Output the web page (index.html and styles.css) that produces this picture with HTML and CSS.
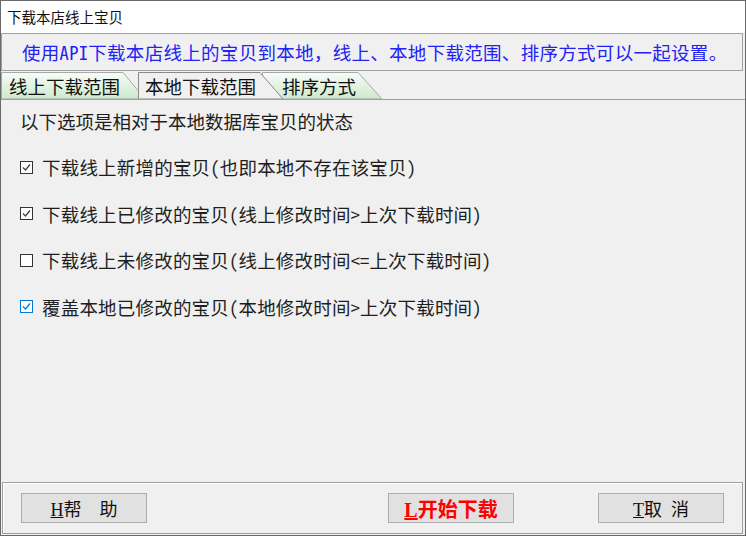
FILE: index.html
```html
<!DOCTYPE html>
<html lang="zh-CN">
<head>
    <meta charset="UTF-8">
    <meta name="viewport" content="width=device-width, initial-scale=1.0">
    <title>下载本店线上宝贝</title>
    <link rel="stylesheet" href="styles.css">
</head>
<body>
    <div class="window">
        <div class="titlebar">下载本店线上宝贝</div>
        <div class="info">使用API下载本店线上的宝贝到本地，线上、本地下载范围、排序方式可以一起设置。</div>
        <div class="tabs">
            <div class="tab tab-online">
                <svg class="tab-bg" width="145" height="27" viewBox="0 0 145 27">
                    <defs>
                        <linearGradient id="g1" x1="0" y1="0" x2="0" y2="1">
                            <stop offset="0" stop-color="#f8fcf8"/>
                            <stop offset="1" stop-color="#cde9cd"/>
                        </linearGradient>
                    </defs>
                    <polygon points="0.5,27 0.5,0.5 122,0.5 144,27" fill="url(#g1)" stroke="#a8a8a8"/>
                </svg>
                <span class="tab-text">线上下载范围</span>
            </div>
            <div class="tab tab-local active">
                <svg class="tab-bg" width="146" height="27" viewBox="0 0 146 27">
                    <polygon points="0.5,27 0.5,0.5 122,0.5 145,27" fill="#f0f0f0" stroke="#8a8a8a"/>
                </svg>
                <span class="tab-text">本地下载范围</span>
            </div>
            <div class="tab tab-sort">
                <svg class="tab-bg" width="122" height="27" viewBox="0 0 122 27">
                    <defs>
                        <linearGradient id="g3" x1="0" y1="0" x2="0" y2="1">
                            <stop offset="0" stop-color="#f8fcf8"/>
                            <stop offset="1" stop-color="#cde9cd"/>
                        </linearGradient>
                    </defs>
                    <polygon points="0.5,27 0.5,0.5 96,0.5 120,27" fill="url(#g3)" stroke="#a8a8a8"/>
                </svg>
                <span class="tab-text">排序方式</span>
            </div>
        </div>
        <div class="panel">
            <p class="note">以下选项是相对于本地数据库宝贝的状态</p>
            <div class="option">
                <span class="box"><svg width="11" height="11" viewBox="0 0 11 11"><path d="M2 5.5 L4.5 8 L9 2.5" fill="none" stroke="#444" stroke-width="1.3"/></svg></span>
                <span>下载线上新增的宝贝(也即本地不存在该宝贝)</span>
            </div>
            <div class="option">
                <span class="box"><svg width="11" height="11" viewBox="0 0 11 11"><path d="M2 5.5 L4.5 8 L9 2.5" fill="none" stroke="#444" stroke-width="1.3"/></svg></span>
                <span>下载线上已修改的宝贝(线上修改时间&gt;上次下载时间)</span>
            </div>
            <div class="option">
                <span class="box"></span>
                <span>下载线上未修改的宝贝(线上修改时间&lt;=上次下载时间)</span>
            </div>
            <div class="option">
                <span class="box box-focus"><svg width="11" height="11" viewBox="0 0 11 11"><path d="M2 5.5 L4.5 8 L9 2.5" fill="none" stroke="#0078d7" stroke-width="1.3"/></svg></span>
                <span>覆盖本地已修改的宝贝(本地修改时间&gt;上次下载时间)</span>
            </div>
        </div>
        <div class="footer">
            <button class="btn btn-help"><u>H</u>帮　助</button>
            <button class="btn btn-start"><u>L</u>开始下载</button>
            <button class="btn btn-cancel"><u>T</u>取&nbsp;&nbsp;消</button>
        </div>
    </div>
</body>
</html>
```

FILE: styles.css
```css
html, body {
    margin: 0;
    padding: 0;
}
body {
    font-family: "Noto Sans Mono CJK SC", "Noto Sans CJK SC", sans-serif;
    background-color: #f0f0f0;
}
.window {
    width: 746px;
    height: 536px;
    box-sizing: border-box;
    border: 1px solid #6a6a6a;
    background-color: #f0f0f0;
    display: flex;
    flex-direction: column;
}
.titlebar {
    height: 32px;
    background-color: white;
    padding-left: 6px;
    font-family: "Noto Sans CJK SC", sans-serif;
    font-size: 14.5px;
    line-height: 32px;
    color: #111;
}
.info {
    height: 36px;
    margin-right: 2px;
    border: 1px solid #a0a0a0;
    padding-left: 20px;
    font-size: 18.5px;
    letter-spacing: 0.3px;
    line-height: 36px;
    color: #2222f4;
    white-space: nowrap;
}
.tabs {
    display: flex;
    height: 28px;
    border-bottom: 1px solid #a0a0a0;
    align-items: flex-end;
}
.tab {
    position: relative;
    height: 27px;
    z-index: 1;
}
.tab-bg {
    position: absolute;
    left: 0;
    top: 0;
}
.tab-text {
    position: relative;
    display: block;
    font-size: 18.5px;
    line-height: 28px;
    color: #111;
    white-space: nowrap;
}
.tab-online {
    width: 145px;
}
.tab-online .tab-text {
    padding-left: 8px;
}
.tab-local {
    width: 146px;
    margin-left: -8px;
}
.tab-local .tab-text {
    padding-left: 7px;
}
.tab-sort {
    width: 122px;
    margin-left: -22px;
    z-index: 0;
}
.tab-sort .tab-text {
    padding-left: 20px;
}
.active {
    z-index: 2;
}
.panel {
    flex: 1;
    padding-top: 9px;
    padding-left: 19px;
}
.note {
    margin: 0 0 22px 0;
    font-size: 18.5px;
    line-height: 24px;
    color: #1e1e1e;
}
.option {
    display: flex;
    align-items: center;
    gap: 9px;
    height: 24px;
    margin-bottom: 22.5px;
    font-size: 18.5px;
    letter-spacing: 0.2px;
    color: #1e1e1e;
    white-space: nowrap;
}
.box {
    width: 11px;
    height: 11px;
    border: 1px solid #333;
    background-color: white;
    display: flex;
}
.box-focus {
    border-color: #0078d7;
}
.footer {
    height: 50px;
    margin: 0 2px 1px 1px;
    border: 1px solid #a0a0a0;
    box-shadow: inset 1px 1px 0 white;
    display: flex;
    align-items: center;
    padding-left: 18px;
}
.btn {
    width: 126px;
    height: 30px;
    padding: 0;
    background-color: #e1e1e1;
    border: 1px solid #adadad;
    font-family: "Liberation Serif", "Noto Sans CJK SC", serif;
    font-size: 18px;
    color: #111;
}
.btn-start {
    margin-left: auto;
    margin-right: 84px;
    color: red;
    font-weight: bold;
    font-size: 20px;
}
.btn-cancel {
    margin-right: 18px;
}
```
